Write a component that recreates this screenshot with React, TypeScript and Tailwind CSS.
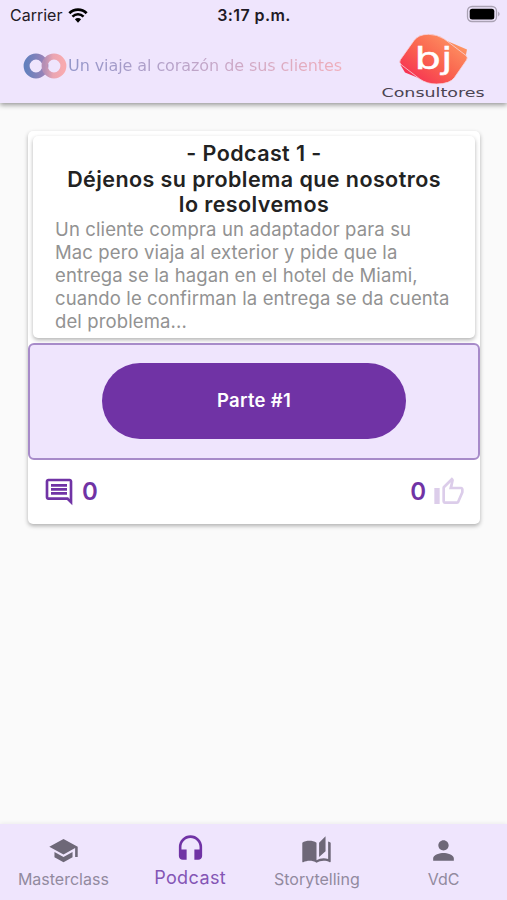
import type { IconType } from "react-icons"
import {
  MdAutoStories,
  MdHeadset,
  MdOutlineComment,
  MdOutlineThumbUp,
  MdPerson,
  MdSchool,
} from "react-icons/md"

type TabProps = {
  label: string
  icon: IconType
  active?: boolean
}

const StatusBar = () => (
  <div className="relative h-[30px] flex items-center text-[#1f1a26]">
    <span className="ml-[10px] text-[16px] leading-[30px]">Carrier</span>
    <svg className="ml-[6px]" width="20" height="15" viewBox="0 0 21 16" fill="none" stroke="#000">
      <path d="M1.3 5.6a13 13 0 0 1 18.4 0" strokeWidth="3" />
      <path d="M4.6 9.2a8.4 8.4 0 0 1 11.8 0" strokeWidth="2.7" />
      <path d="M10.5 15.6 7.2 12.1a4.7 4.7 0 0 1 6.6 0z" fill="#000" stroke="none" />
    </svg>
    <span className="absolute inset-x-0 pl-[1px] text-center text-[16px] font-semibold tracking-[0.4px]">
      3:17 p.m.
    </span>
    <svg className="absolute left-[466px] top-[5px]" width="36" height="18" viewBox="0 0 36 18">
      <rect x="1.5" y="1.5" width="29" height="15" rx="4.5" fill="none" stroke="#aaa2b4" strokeWidth="1.3" />
      <rect x="3.7" y="3.8" width="24.6" height="10.6" rx="2.5" />
      <path d="M32.3 6.5q2.4 2.5 0 5z" fill="#9991a3" />
    </svg>
  </div>
)

const Rings = () => (
  <svg width="44" height="26" viewBox="0 0 44 26" fill="none" strokeWidth="6">
    <defs>
      <linearGradient id="ringLeft" x1="0" x2="1">
        <stop offset="0" stopColor="#6480bd" />
        <stop offset="1" stopColor="#9c83b8" />
      </linearGradient>
      <linearGradient id="ringRight" x1="0" x2="1">
        <stop offset="0" stopColor="#b58fb5" />
        <stop offset=".45" stopColor="#eaa5b2" />
        <stop offset="1" stopColor="#f8aaaf" />
      </linearGradient>
    </defs>
    <circle cx="13" cy="13" r="9.4" stroke="url(#ringLeft)" />
    <circle cx="31" cy="13" r="9.4" stroke="url(#ringRight)" />
  </svg>
)

const Logo = () => (
  <svg width="106" height="70" viewBox="380 31 106 70">
    <defs>
      <linearGradient id="brand" x1="0" y1="1" x2="1" y2="0">
        <stop offset=".08" stopColor="#f62b54" />
        <stop offset=".5" stopColor="#fa654f" />
        <stop offset="1" stopColor="#ffa269" />
      </linearGradient>
    </defs>
    <path d="M400.5 65 446 40.5 467 49.5 465 60 422 79.5 405 72.5z" fill="url(#brand)" />
    <path
      d="M400.5 59.5 414 40.5Q418.5 34.3 428.5 34.3 437 34.3 444 38.8L466 55.5Q468.2 57.5 466.6 60L454.5 77.5Q450 84 436.5 84 427 84 420 79.2L401 64.5Q398.6 62.3 400.5 59.5z"
      fill="url(#brand)"
      stroke="#f6d4dc"
      strokeWidth=".8"
    />
    <text
      x="414.5"
      y="68.5"
      fill="#fff"
      stroke="#fff"
      strokeWidth=".4"
      fontFamily="'DejaVu Sans', sans-serif"
      fontSize="30"
      textLength="38"
      lengthAdjust="spacingAndGlyphs"
    >
      bj
    </text>
    <text
      x="381.5"
      y="97.2"
      fill="#4b4452"
      fontFamily="'DejaVu Sans', sans-serif"
      fontSize="12"
      textLength="103"
      lengthAdjust="spacingAndGlyphs"
    >
      Consultores
    </text>
  </svg>
)

const Tab = ({ label, icon: Icon, active }: TabProps) => (
  <div className="flex-1 flex flex-col items-center">
    {active ? (
      <>
        <Icon className="mt-[10px] text-[31px] text-[#7033a5]" />
        <span className="text-[18px] leading-[26px] tracking-[0.4px] text-[#8455b5]">{label}</span>
      </>
    ) : (
      <>
        <Icon className="mt-[11px] text-[31px] text-[#6e6878]" />
        <span className="text-[16px] leading-[26px] text-[#928a9f]">{label}</span>
      </>
    )}
  </div>
)

const App = () => {
  return (
    <main className="w-[507px] h-[900px] flex flex-col overflow-hidden bg-[#fafafa] font-['Inter',sans-serif]">
      <header className="h-[103px] shrink-0 bg-[#efe5fd] shadow-[0_2px_5px_rgba(0,0,0,0.4)]">
        <StatusBar />
        <div className="flex items-start">
          <div className="ml-[23px] mt-[23px] flex items-center">
            <Rings />
            <span className="ml-[1px] w-[290px] whitespace-nowrap font-['DejaVu_Sans',sans-serif] text-[16px] leading-[26px] tracking-[-0.08px] bg-linear-to-r from-[#9295c9] via-[#c5a7c8] to-[#f5aeb8] bg-clip-text text-transparent">
              Un viaje al corazón de sus clientes
            </span>
          </div>
          <div className="ml-[22px] mt-[1px]">
            <Logo />
          </div>
        </div>
      </header>

      <section className="mt-[28px] ml-[28px] w-[452px] h-[393px] rounded-[5px] bg-white shadow-[0_2px_4px_rgba(0,0,0,0.3)]">
        <div className="pt-[5px] px-[5px]">
          <div className="h-[202px] pt-[5px] px-[22px] rounded-[5px] bg-white shadow-[0_2px_4px_rgba(0,0,0,0.3)]">
            <h1 className="text-center whitespace-nowrap text-[21.5px] leading-[25.7px] font-semibold tracking-[0.42px] text-[#222]">
              - Podcast 1 -
              <br />
              Déjenos su problema que nosotros
              <br />
              lo resolvemos
            </h1>
            <p className="whitespace-nowrap text-[18.5px] leading-[22.9px] tracking-[0.12px] text-[#929292]">
              Un cliente compra un adaptador para su
              <br />
              Mac pero viaja al exterior y pide que la
              <br />
              entrega se la hagan en el hotel de Miami,
              <br />
              cuando le confirman la entrega se da cuenta
              <br />
              del problema...
            </p>
          </div>
        </div>
        <div className="mt-[5px] h-[117px] pb-[1px] flex items-center justify-center rounded-[6px] border-2 border-[#a78bc9] bg-[#efe5fd]">
          <button className="w-[304px] h-[76px] rounded-full bg-[#7033a5] text-[18.5px] font-semibold tracking-[0.3px] text-white">
            Parte #1
          </button>
        </div>
        <div className="h-[64px] px-[15px] flex items-center justify-between text-[24px] font-semibold text-[#7033a5]">
          <div className="flex items-center">
            <MdOutlineComment className="text-[32px]" />
            <span className="ml-[7px]">0</span>
          </div>
          <div className="flex items-center">
            <span>0</span>
            <MdOutlineThumbUp className="ml-[7px] text-[32px] text-[#dccdea]" />
          </div>
        </div>
      </section>

      <nav className="mt-auto h-[76px] shrink-0 flex bg-[#efe5fd] shadow-[0_-1px_4px_rgba(0,0,0,0.06)]">
        <Tab label="Masterclass" icon={MdSchool} />
        <Tab label="Podcast" icon={MdHeadset} active />
        <Tab label="Storytelling" icon={MdAutoStories} />
        <Tab label="VdC" icon={MdPerson} />
      </nav>
    </main>
  )
}

export default App
